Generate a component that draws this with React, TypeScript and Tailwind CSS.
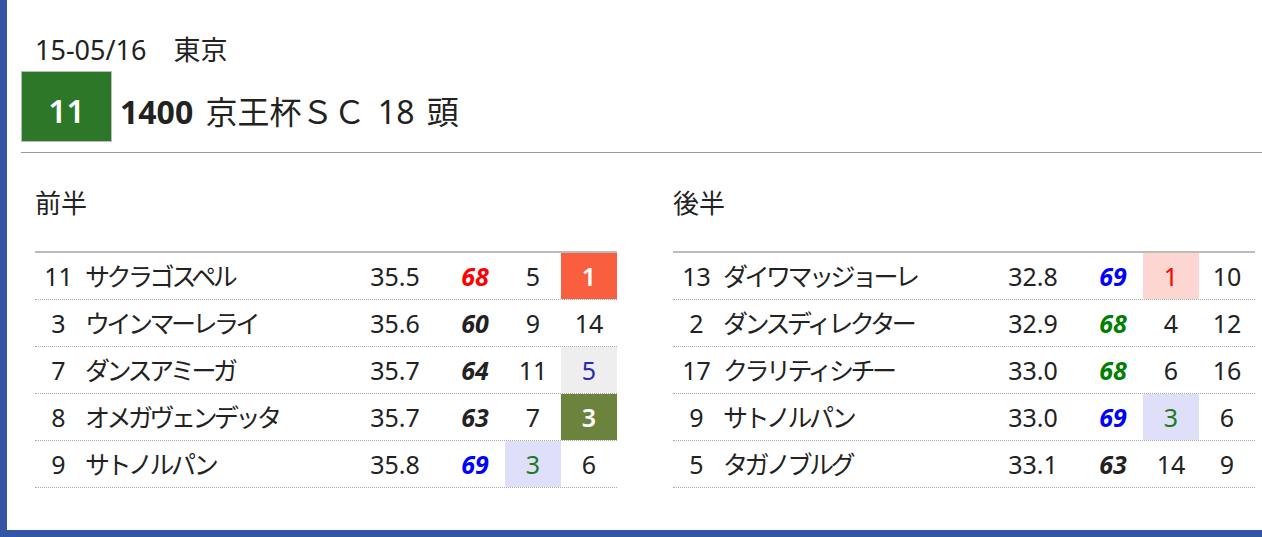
type Row = {
  no: string;
  name: string;
  time: string;
  rating: string;
  ratingCls: string;
  a: string;
  aCls: string;
  b: string;
  bCls: string;
};

const first: Row[] = [
  { no: "11", name: "サクラゴスペル", time: "35.5", rating: "68", ratingCls: "text-[#ff0000]", a: "5", aCls: "", b: "1", bCls: "bg-[#f95e3e] text-white font-semibold" },
  { no: "3", name: "ウインマーレライ", time: "35.6", rating: "60", ratingCls: "text-[#222]", a: "9", aCls: "", b: "14", bCls: "" },
  { no: "7", name: "ダンスアミーガ", time: "35.7", rating: "64", ratingCls: "text-[#222]", a: "11", aCls: "", b: "5", bCls: "bg-[#eeeeee] text-[#2a2aa8]" },
  { no: "8", name: "オメガヴェンデッタ", time: "35.7", rating: "63", ratingCls: "text-[#222]", a: "7", aCls: "", b: "3", bCls: "bg-[#6b833c] text-white font-semibold" },
  { no: "9", name: "サトノルパン", time: "35.8", rating: "69", ratingCls: "text-[#0000ff]", a: "3", aCls: "bg-[#dfdff9] text-[#1d7a1d]", b: "6", bCls: "" },
];

const second: Row[] = [
  { no: "13", name: "ダイワマッジョーレ", time: "32.8", rating: "69", ratingCls: "text-[#0000ff]", a: "1", aCls: "bg-[#fdd6d1] text-[#ff0000]", b: "10", bCls: "" },
  { no: "2", name: "ダンスディレクター", time: "32.9", rating: "68", ratingCls: "text-[#008000]", a: "4", aCls: "", b: "12", bCls: "" },
  { no: "17", name: "クラリティシチー", time: "33.0", rating: "68", ratingCls: "text-[#008000]", a: "6", aCls: "", b: "16", bCls: "" },
  { no: "9", name: "サトノルパン", time: "33.0", rating: "69", ratingCls: "text-[#0000ff]", a: "3", aCls: "bg-[#dfdff9] text-[#1d7a1d]", b: "6", bCls: "" },
  { no: "5", name: "タガノブルグ", time: "33.1", rating: "63", ratingCls: "text-[#222]", a: "14", aCls: "", b: "9", bCls: "" },
];

function LapTable({ title, rows }: { title: string; rows: Row[] }) {
  return (
    <div>
      <h2 className="text-[26px] leading-[36px]">{title}</h2>
      <div className="mt-[30px] border-t-2 border-[#bbbbbb]">
        {rows.map((r, i) => (
          <div
            key={i}
            className="grid h-[47px] grid-cols-[47px_263px_100px_60px_56px_56px] border-b border-dotted border-[#aaaaaa] text-[25px] leading-[46px]"
          >
            <div className="text-center">{r.no}</div>
            <div className="pl-[3px] tracking-[-3.5px] whitespace-nowrap">{r.name}</div>
            <div className="text-center">{r.time}</div>
            <div className={`text-center font-bold italic ${r.ratingCls}`}>{r.rating}</div>
            <div className={`text-center ${r.aCls}`}>{r.a}</div>
            <div className={`text-center ${r.bCls}`}>{r.b}</div>
          </div>
        ))}
      </div>
    </div>
  );
}

export default function App() {
  return (
    <div className="min-h-screen bg-[#3355a5] pb-[7px] pl-[7px] font-['Noto_Sans','Noto_Sans_CJK_JP',sans-serif] text-[#222]">
      <div className="h-[530px] overflow-hidden bg-white pl-[14px]">
        {/* Header */}
        <div className="pl-[14px] pt-[32px] text-[27px] leading-[36px]">15-05/16　東京</div>
        <div className="mt-[3px] flex items-start">
          <div className="h-[71px] w-[91px] border border-[#bbbbbb] bg-[#2d7828] pt-[19px] text-center text-[32px] leading-[40px] font-semibold text-white">
            11
          </div>
          <div className="ml-[8px] mt-[21px] text-[32px] leading-[40px] whitespace-nowrap [word-spacing:4px]">
            <span className="font-bold">1400</span> 京王杯ＳＣ 18 頭
          </div>
        </div>
        <div className="mt-[10px] h-px bg-[#999999]" />

        {/* Lap tables */}
        <div className="mt-[32px] grid grid-cols-[582px_582px] gap-[56px] pl-[14px]">
          <LapTable title="前半" rows={first} />
          <LapTable title="後半" rows={second} />
        </div>
      </div>
    </div>
  );
}
